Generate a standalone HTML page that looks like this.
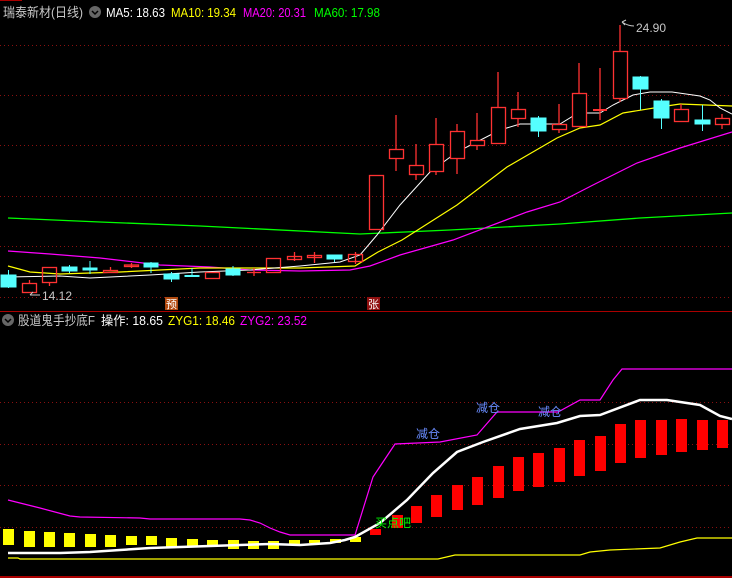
<!DOCTYPE html>
<html><head><meta charset="utf-8"><style>
html,body{margin:0;padding:0;background:#000;}
body{width:732px;height:578px;overflow:hidden;position:relative;font-family:"Liberation Sans","Noto Sans CJK SC",sans-serif;}
svg{position:absolute;left:0;top:0;}
</style></head><body>
<svg width="732" height="578" viewBox="0 0 732 578" xmlns="http://www.w3.org/2000/svg" font-family="Liberation Sans, Noto Sans CJK SC, sans-serif">
<line x1="0" y1="0.5" x2="22" y2="0.5" stroke="#a00" />
<g stroke="#8a1010" stroke-dasharray="1,3" stroke-width="1">
<line x1="0" y1="45.5" x2="732" y2="45.5"/><line x1="0" y1="95.5" x2="732" y2="95.5"/>
<line x1="0" y1="145.5" x2="732" y2="145.5"/><line x1="0" y1="196.5" x2="732" y2="196.5"/>
<line x1="0" y1="246.5" x2="732" y2="246.5"/><line x1="0" y1="297.5" x2="732" y2="297.5"/>
<line x1="0" y1="402.5" x2="732" y2="402.5"/><line x1="0" y1="444.5" x2="732" y2="444.5"/>
<line x1="0" y1="485.5" x2="732" y2="485.5"/><line x1="0" y1="527.5" x2="732" y2="527.5"/>
</g>
<line x1="0" y1="311.5" x2="732" y2="311.5" stroke="#a00"/>
<line x1="0" y1="577" x2="732" y2="577" stroke="#a00" stroke-width="2"/>

<polyline fill="none" stroke="#00ff00" stroke-width="1.3" points="8,218 100,222 200,226 360,234 450,230 560,224 640,218 732,213"/>
<polyline fill="none" stroke="#ff00ff" stroke-width="1.2" points="8,251 50,254 100,258 160,265 210,267 250,270 300,271 350,270 370,266 400,255 453,240 527,212 560,202 593,185 637,163 680,148 732,132"/>
<polyline fill="none" stroke="#ffff00" stroke-width="1.2" points="8,266 30,272 60,274 120,272 200,268 300,268 355,266 378,252 402,240 457,205 507,167 557,138 580,128 600,125 623,113 660,107 680,104 732,106"/>
<polyline fill="none" stroke="#ffffff" stroke-width="1" points="8,277 60,276 90,278 150,275 200,272 250,270 300,266 340,262 360,255 377,235 400,205 430,172 457,152 500,130 520,124 560,124 578,113 600,113 613,105 633,95 650,92 672,92 700,96 710,100 720,108 732,114"/>

<g stroke="#ff3232" fill="none" stroke-width="1.3">
<line x1="29.5" y1="280" x2="29.5" y2="283"/><rect x="22.5" y="283.5" width="14" height="9"/>
<rect x="42.5" y="267.5" width="14" height="15"/><line x1="49.5" y1="282" x2="49.5" y2="286"/>
<line x1="110.5" y1="267" x2="110.5" y2="270"/><rect x="103.5" y="270.5" width="14" height="2"/>
<line x1="131.5" y1="263" x2="131.5" y2="268"/><rect x="124.5" y="265" width="14" height="1.5"/>
<rect x="205.5" y="272.5" width="14" height="6"/>
<line x1="254" y1="268" x2="254" y2="276"/><line x1="247" y1="272.5" x2="261" y2="272.5"/>
<rect x="266.5" y="258.5" width="14" height="14"/>
<line x1="294.5" y1="252" x2="294.5" y2="261"/><rect x="287.5" y="256.5" width="14" height="3"/>
<line x1="314.5" y1="252" x2="314.5" y2="263"/><rect x="307.5" y="255.5" width="14" height="2"/>
<line x1="355.5" y1="252" x2="355.5" y2="264"/><rect x="348.5" y="254.5" width="14" height="7"/>
<rect x="369.5" y="175.5" width="14" height="54"/>
<line x1="396" y1="115" x2="396" y2="171"/><rect x="389.5" y="149.5" width="14" height="9" fill="#000"/>
<line x1="416" y1="144" x2="416" y2="180"/><rect x="409.5" y="165.5" width="14" height="9" fill="#000"/>
<line x1="436" y1="118" x2="436" y2="175"/><rect x="429.5" y="144.5" width="14" height="27" fill="#000"/>
<line x1="457" y1="124" x2="457" y2="174"/><rect x="450.5" y="131.5" width="14" height="27" fill="#000"/>
<line x1="477" y1="113" x2="477" y2="150"/><rect x="470.5" y="140.5" width="14" height="5" fill="#000"/>
<line x1="498" y1="72" x2="498" y2="143"/><rect x="491.5" y="107.5" width="14" height="36" fill="#000"/>
<line x1="518" y1="92" x2="518" y2="127"/><rect x="511.5" y="109.5" width="14" height="9" fill="#000"/>
<line x1="559" y1="104" x2="559" y2="133"/><rect x="552.5" y="124.5" width="14" height="5" fill="#000"/>
<line x1="579" y1="63" x2="579" y2="126"/><rect x="572.5" y="93.5" width="14" height="33" fill="#000"/>
<line x1="600" y1="68" x2="600" y2="120"/><line x1="593" y1="110" x2="607" y2="110" stroke-width="2"/>
<line x1="620" y1="25" x2="620" y2="102"/><rect x="613.5" y="51.5" width="14" height="47" fill="#000"/>
<line x1="681" y1="104" x2="681" y2="110"/><rect x="674.5" y="109.5" width="14" height="12" fill="#000"/>
<line x1="722" y1="114" x2="722" y2="129"/><rect x="715.5" y="118.5" width="14" height="6" fill="#000"/>
</g>
<g fill="#55ffff" stroke="#55ffff" stroke-width="1">
<line x1="8.5" y1="270" x2="8.5" y2="288"/><rect x="1" y="275" width="15" height="12"/>
<line x1="69.5" y1="265" x2="69.5" y2="273"/><rect x="62" y="267" width="15" height="4"/>
<line x1="90" y1="261" x2="90" y2="274"/><rect x="83" y="268" width="14" height="2"/>
<line x1="151" y1="262" x2="151" y2="273"/><rect x="144" y="263" width="14" height="4"/>
<line x1="171.5" y1="272" x2="171.5" y2="282"/><rect x="164" y="274" width="15" height="5"/>
<line x1="192" y1="268" x2="192" y2="277"/><rect x="185" y="275.5" width="14" height="1"/>
<line x1="233" y1="266" x2="233" y2="276"/><rect x="226" y="269" width="14" height="6"/>
<line x1="334.5" y1="255" x2="334.5" y2="262"/><rect x="327" y="255" width="15" height="4"/>
<line x1="538.5" y1="116" x2="538.5" y2="137"/><rect x="531" y="118" width="15" height="13"/>
<line x1="640.5" y1="76" x2="640.5" y2="110"/><rect x="633" y="77" width="15" height="12"/>
<line x1="661.5" y1="99" x2="661.5" y2="129"/><rect x="654" y="101" width="15" height="17"/>
<line x1="702.5" y1="105" x2="702.5" y2="131"/><rect x="695" y="120" width="15" height="4"/>
</g>
<text x="636" y="32" fill="#c8c8c8" font-size="12">24.90</text>
<path d="M622,22 l4,-2 M622,22 l3,3 M622,22 q6,4 12,4" stroke="#c8c8c8" fill="none"/>
<text x="42" y="300" fill="#c8c8c8" font-size="12">14.12</text>
<path d="M30,295 h10 M30,295 l3,-3" stroke="#c8c8c8" fill="none"/>
<rect x="165" y="297" width="13" height="13" fill="#b04a10"/>
<text x="166" y="308" fill="#fff" font-size="11">预</text>
<rect x="367" y="297" width="13" height="13" fill="#901010"/>
<text x="368" y="308" fill="#fff" font-size="11">张</text>

<text x="3" y="17" fill="#c8c8c8" font-size="13" textLength="80" lengthAdjust="spacingAndGlyphs">瑞泰新材(日线)</text>
<circle cx="95" cy="12" r="6" fill="#666"/><path d="M92,11 l3,3 l3,-3" stroke="#000" fill="none" stroke-width="1.5"/>
<text x="106" y="17" font-size="12.5" fill="#fff" textLength="59" lengthAdjust="spacingAndGlyphs">MA5: 18.63</text>
<text x="171" y="17" font-size="12.5" fill="#ffff00" textLength="65" lengthAdjust="spacingAndGlyphs">MA10: 19.34</text>
<text x="243" y="17" font-size="12.5" fill="#ff00ff" textLength="63" lengthAdjust="spacingAndGlyphs">MA20: 20.31</text>
<text x="314" y="17" font-size="12.5" fill="#00ff00" textLength="66" lengthAdjust="spacingAndGlyphs">MA60: 17.98</text>
<circle cx="8" cy="320" r="6" fill="#666"/><path d="M5,319 l3,3 l3,-3" stroke="#000" fill="none" stroke-width="1.5"/>
<text x="18" y="325" fill="#c8c8c8" font-size="13" textLength="77" lengthAdjust="spacingAndGlyphs">股道鬼手抄底F</text>
<text x="101" y="325" fill="#fff" font-size="12.5" textLength="62" lengthAdjust="spacingAndGlyphs">操作: 18.65</text>
<text x="168" y="325" fill="#ffff00" font-size="12.5" textLength="67" lengthAdjust="spacingAndGlyphs">ZYG1: 18.46</text>
<text x="240" y="325" fill="#ff00ff" font-size="12.5" textLength="67" lengthAdjust="spacingAndGlyphs">ZYG2: 23.52</text>

<g fill="#ffff00">
<rect x="3" y="529" width="11" height="16"/><rect x="24" y="531" width="11" height="16"/>
<rect x="44" y="532" width="11" height="15"/><rect x="64" y="533" width="11" height="14"/>
<rect x="85" y="534" width="11" height="13"/><rect x="105" y="535" width="11" height="12"/>
<rect x="126" y="536" width="11" height="9"/><rect x="146" y="536" width="11" height="9"/>
<rect x="166" y="538" width="11" height="9"/><rect x="187" y="539" width="11" height="8"/>
<rect x="207" y="540" width="11" height="7"/><rect x="228" y="540" width="11" height="9"/>
<rect x="248" y="541" width="11" height="8"/><rect x="268" y="541" width="11" height="8"/>
<rect x="289" y="540" width="11" height="5"/><rect x="309" y="540" width="11" height="3"/>
<rect x="330" y="539" width="11" height="4"/><rect x="350" y="537" width="11" height="5"/>
</g>
<polyline fill="none" stroke="#ffff00" stroke-width="1.2" points="8,558 18,558 20,559 438,559 455,555 580,555 590,552 610,550 660,548 680,542 697,538 732,538"/>
<polyline fill="none" stroke="#ff00ff" stroke-width="1.2" points="8,500 20,503 40,508 70,516 80,517 140,518 150,519 240,519 250,520 260,523 270,528 280,532 290,535 355,535 373,477 395,444 440,442 477,435 497,412 558,412 580,400 600,400 613,380 622,369 732,369"/>
<g fill="#ff0000">
<rect x="370" y="529" width="11" height="6"/><rect x="392" y="515" width="11" height="13"/>
<rect x="411" y="506" width="11" height="17"/><rect x="431" y="495" width="11" height="22"/>
<rect x="452" y="485" width="11" height="25"/><rect x="472" y="477" width="11" height="28"/>
<rect x="493" y="466" width="11" height="32"/><rect x="513" y="457" width="11" height="34"/>
<rect x="533" y="453" width="11" height="34"/><rect x="554" y="448" width="11" height="34"/>
<rect x="574" y="440" width="11" height="36"/><rect x="595" y="436" width="11" height="35"/>
<rect x="615" y="424" width="11" height="39"/><rect x="635" y="420" width="11" height="38"/>
<rect x="656" y="420" width="11" height="35"/><rect x="676" y="419" width="11" height="33"/>
<rect x="697" y="420" width="11" height="30"/><rect x="717" y="420" width="11" height="28"/>
</g>
<polyline fill="none" stroke="#ffffff" stroke-width="2.5" points="8,553 60,553 90,552 120,550 150,548 210,546 240,545 270,544 300,545 330,543 345,540 355,537 380,523 407,500 433,473 457,452 483,442 520,429 557,423 580,416 600,415 640,400 667,400 700,405 720,416 732,419"/>
<text x="375" y="527" fill="#00ff00" font-size="12">买点吧</text>
<text x="416" y="438" fill="#6a8cff" font-size="12">减仓</text>
<text x="476" y="412" fill="#6a8cff" font-size="12">减仓</text>
<text x="538" y="416" fill="#6a8cff" font-size="12">减仓</text>
</svg>
</body></html>
